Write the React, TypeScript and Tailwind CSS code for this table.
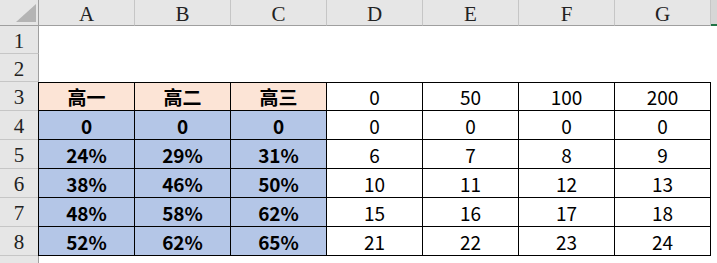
import React from 'react';

const cols = ['A', 'B', 'C', 'D', 'E', 'F', 'G'];

const data: { text: string; bg: string; bold: boolean }[][] = [
  [
    { text: '高一', bg: 'bg-[#fce4d6]', bold: true },
    { text: '高二', bg: 'bg-[#fce4d6]', bold: true },
    { text: '高三', bg: 'bg-[#fce4d6]', bold: true },
    { text: '0', bg: 'bg-white', bold: false },
    { text: '50', bg: 'bg-white', bold: false },
    { text: '100', bg: 'bg-white', bold: false },
    { text: '200', bg: 'bg-white', bold: false },
  ],
  ...[
    ['0', '0', '0', '0', '0', '0', '0'],
    ['24%', '29%', '31%', '6', '7', '8', '9'],
    ['38%', '46%', '50%', '10', '11', '12', '13'],
    ['48%', '58%', '62%', '15', '16', '17', '18'],
    ['52%', '62%', '65%', '21', '22', '23', '24'],
  ].map((r) =>
    r.map((t, i) => ({
      text: t,
      bg: i < 3 ? 'bg-[#b4c6e7]' : 'bg-white',
      bold: i < 3,
    })),
  ),
];

const headFont = "font-['Liberation_Serif','Noto_Serif_CJK_SC',serif]";
const cellFont = "font-['Noto_Sans_CJK_SC','Open_Sans',sans-serif]";

export default function App() {
  return (
    <div className="w-[717px] h-[263px] overflow-hidden bg-white">
      <div className="grid grid-cols-[39px_repeat(7,96px)_6px] grid-rows-[26px_28px_28px_repeat(6,29px)_7px]">
        {/* corner */}
        <div className="bg-[#e6e6e6] border-r border-b border-[#9f9f9f] relative">
          <div className="absolute left-[16px] top-[4px] w-0 h-0 border-l-[20px] border-l-transparent border-b-[18px] border-b-[#b4b4b4]" />
        </div>
        {cols.map((c) => (
          <div
            key={c}
            className={`bg-[#e6e6e6] border-r border-[#c6c6c6] border-b border-b-[#9f9f9f] flex items-center justify-center pt-[3px] text-[21px] leading-none text-[#222] ${headFont}`}
          >
            {c}
          </div>
        ))}
        <div className="bg-[#d6d6d6] border-b-2 border-[#217346]" />

        {/* rows 1, 2 */}
        {[1, 2].map((n) => (
          <React.Fragment key={n}>
            <div className={`bg-[#e6e6e6] border-r border-[#9f9f9f] border-b border-b-[#c6c6c6] flex items-center justify-center pt-[3px] text-[21px] leading-none text-[#222] ${headFont}`}>
              {n}
            </div>
            <div className="col-span-8 bg-white" />
          </React.Fragment>
        ))}

        {/* rows 3-8 */}
        {data.map((row, ri) => (
          <React.Fragment key={ri}>
            <div className={`bg-[#e6e6e6] border-r border-[#9f9f9f] border-b border-b-[#c6c6c6] flex items-center justify-center pt-[3px] text-[21px] leading-none text-[#222] ${headFont}`}>
              {ri + 3}
            </div>
            {row.map((cell, ci) => (
              <div
                key={ci}
                className={`${cell.bg} border-r border-b border-black ${ri === 0 ? 'border-t' : ''} ${ci === 0 ? 'border-l -ml-px' : ''} flex items-center justify-center text-[19px] leading-none text-black ${cellFont} ${cell.bold ? 'font-bold' : ''}`}
              >
                {cell.text}
              </div>
            ))}
            <div className="bg-white" />
          </React.Fragment>
        ))}

        {/* trailing row */}
        <div className="bg-[#e6e6e6] border-r border-[#9f9f9f]" />
        <div className="col-span-8 bg-white" />
      </div>
    </div>
  );
}
